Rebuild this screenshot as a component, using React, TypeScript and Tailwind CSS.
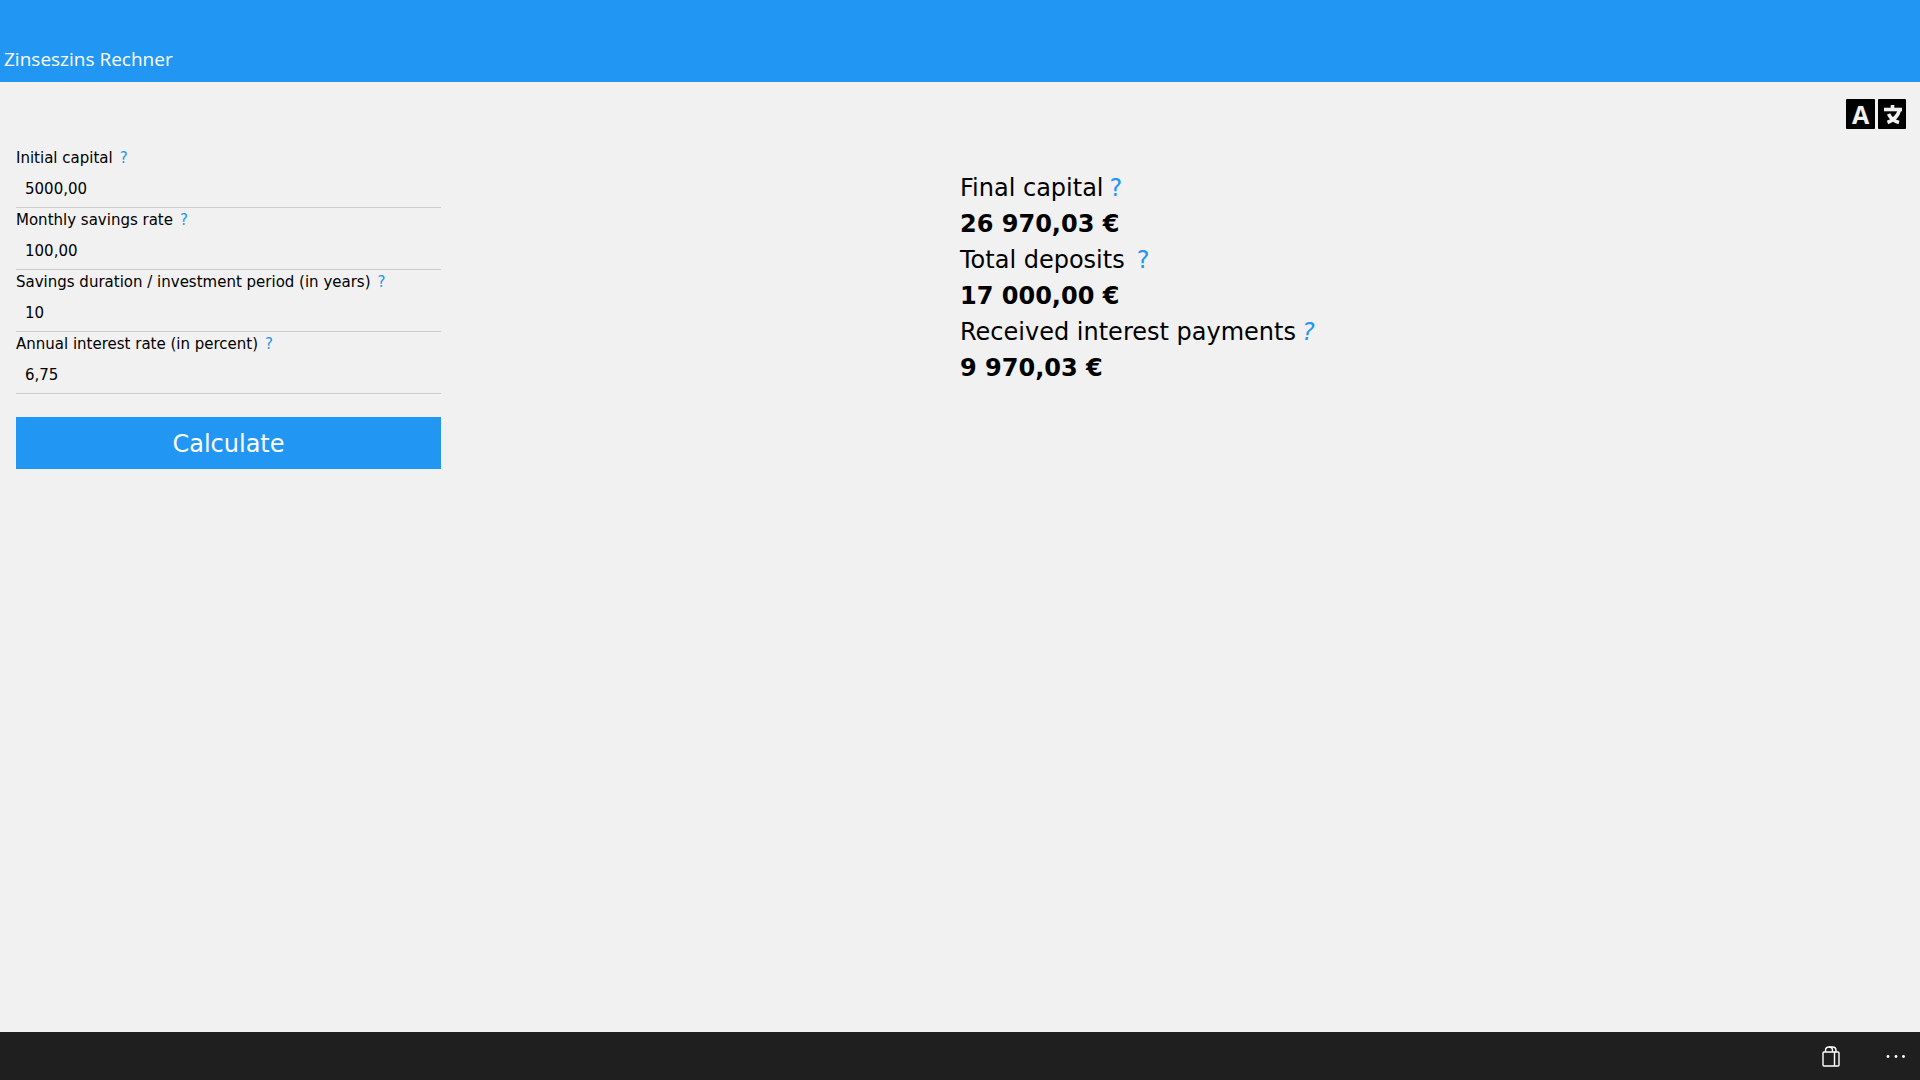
import { useState } from "react";

const fields = [
  { id: "capital", label: "Initial capital", value: "5000,00" },
  { id: "savings", label: "Monthly savings rate", value: "100,00" },
  { id: "years", label: "Savings duration / investment period (in years)", value: "10" },
  { id: "interest", label: "Annual interest rate (in percent)", value: "6,75" },
];

const results = [
  { label: "Final capital", value: "26 970,03 €", help: "ml-[6px]" },
  { label: "Total deposits", value: "17 000,00 €", help: "ml-3" },
  { label: "Received interest payments", value: "9 970,03 €", help: "ml-[6px] italic" },
];

function LanguageIcon() {
  return (
    <span className="flex gap-[3px]" aria-hidden="true">
      <span className="flex h-[30px] w-[29px] items-center justify-center rounded-[1px] bg-black font-['Open_Sans',sans-serif] text-[25px] leading-[30px] font-bold text-[#f1f1f1]">
        A
      </span>
      <svg viewBox="0 0 28 30" className="h-[30px] w-7" fill="none" stroke="#f1f1f1" strokeWidth="3.6">
        <rect width="28" height="30" rx="1" fill="#000" stroke="none" />
        <path d="M6 10.500H24" />
        <path d="M14.500 6V10" />
        <path d="M21.500 11C20 17 16 21 9.500 23.500" />
        <path d="M10.500 15C12.500 19 15.500 22 21 23.500" />
      </svg>
    </span>
  );
}

function BagIcon() {
  return (
    <svg viewBox="0 0 18 21" className="h-[21px] w-[18px]" fill="none" stroke="#fff" strokeWidth="1.4" aria-hidden="true">
      <rect x="1" y="6" width="16" height="14" rx="1" />
      <path d="M12.500 6V20" />
      <path d="M3.500 6V4.500C3.500 2.500 5 1 7 1S10.500 2.500 10.500 4.500V6" />
      <path d="M7 1H10.500C12.500 1 14 2.500 14 4.500V6" />
    </svg>
  );
}

export default function App() {
  const [values, setValues] = useState<Record<string, string>>(
    Object.fromEntries(fields.map((f) => [f.id, f.value]))
  );

  return (
    <div className="flex min-h-screen flex-col bg-[#f1f1f1] font-['DejaVu_Sans',Verdana,sans-serif] text-black">
      <header className="flex h-[82px] items-end bg-[#2196f3] px-1 pb-[9px]">
        <h1 className="font-['Open_Sans',sans-serif] text-[19px] leading-7 text-white">Zinseszins Rechner</h1>
      </header>

      <main className="flex-1">
        <div className="flex justify-end px-[14px] pt-[17px]">
          <button type="button" aria-label="Change language">
            <LanguageIcon />
          </button>
        </div>

        <div className="grid grid-cols-2 pt-[17px]">
          <form className="px-4" onSubmit={(e) => e.preventDefault()}>
            <div className="max-w-[425px]">
              {fields.map((field) => (
                <div key={field.id} className="h-[62px] border-b border-[#cccccc]">
                  <div className="flex h-6 items-center gap-[7px] text-[15px]">
                    <label htmlFor={field.id}>{field.label}</label>
                    <button type="button" aria-label={`Help: ${field.label}`} className="text-[#2196f3]">
                      ?
                    </button>
                  </div>
                  <input
                    id={field.id}
                    value={values[field.id]}
                    onChange={(e) => setValues({ ...values, [field.id]: e.target.value })}
                    className="h-9 w-full bg-transparent px-[9px] pt-[2px] text-[15px] outline-none"
                  />
                </div>
              ))}
              <button type="submit" className="mt-[23px] h-[52px] w-full bg-[#2196f3] pt-[2px] text-2xl text-white">
                Calculate
              </button>
            </div>
          </form>

          <dl className="pt-6 text-2xl leading-9">
            {results.map((result) => (
              <div key={result.label}>
                <dt>
                  {result.label}
                  <button type="button" aria-label={`Help: ${result.label}`} className={`text-[#2196f3] ${result.help}`}>
                    ?
                  </button>
                </dt>
                <dd className="font-bold">{result.value}</dd>
              </div>
            ))}
          </dl>
        </div>
      </main>

      <footer className="flex h-12 items-center justify-end gap-[46px] bg-[#1f1f1f] px-[14px]">
        <button type="button" aria-label="Store">
          <BagIcon />
        </button>
        <button type="button" aria-label="More options">
          <svg viewBox="0 0 20 4" className="h-1 w-5" fill="#fff" aria-hidden="true">
            <circle cx="2" cy="2.500" r="1.400" />
            <circle cx="10" cy="2.500" r="1.400" />
            <circle cx="17.500" cy="2.500" r="1.400" />
          </svg>
        </button>
      </footer>
    </div>
  );
}
